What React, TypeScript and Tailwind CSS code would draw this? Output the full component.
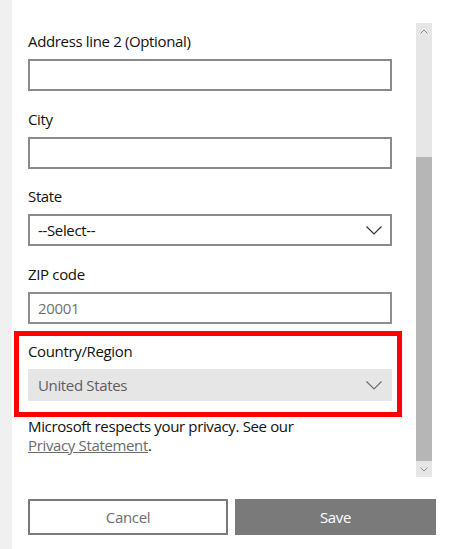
import React from "react";

const font = { fontFamily: '"Open Sans", "Noto Sans", sans-serif' };

function Chevron({ color = "#333333" }: { color?: string }) {
  return (
    <svg width="16" height="9" viewBox="0 0 16 9" fill="none">
      <path d="M0.5 0.5 L8 8 L15.5 0.5" stroke={color} strokeWidth="1.2" />
    </svg>
  );
}

function Label({ children }: { children: React.ReactNode }) {
  return <div className="h-5 text-[15px] leading-5 tracking-[-0.35px] text-[#111111]">{children}</div>;
}

export default function App() {
  return (
    <div className="relative flex h-[549px] w-[458px] overflow-hidden bg-white" style={font}>
      {/* left backdrop strip */}
      <div className="w-[12px] shrink-0 bg-[#f0f0f0]" />

      <div className="flex flex-1 flex-col">
        <div className="flex flex-1">
          {/* form */}
          <div className="flex w-[380px] flex-col pl-[16px] pt-[31px]">
            <div className="flex w-[364px] flex-col">
              <div className="flex flex-col gap-2">
                <Label>Address line 2 (Optional)</Label>
                <div className="h-8 border-2 border-[#8a8a8a]" />
              </div>
              <div className="mt-[18px] flex flex-col gap-2">
                <Label>City</Label>
                <div className="h-8 border-2 border-[#8a8a8a]" />
              </div>
              <div className="mt-[17px] flex flex-col gap-2">
                <Label>State</Label>
                <div className="flex h-8 items-center justify-between border-2 border-[#8a8a8a] pl-[8px] pr-[8px]">
                  <span className="text-[15px] tracking-[-0.35px] text-[#111111]">--Select--</span>
                  <Chevron />
                </div>
              </div>
              <div className="mt-[18px] flex flex-col gap-2">
                <Label>ZIP code</Label>
                <div className="flex h-8 items-center border-2 border-[#8e8e8e] pl-[8px]">
                  <span className="text-[15px] tracking-[-0.35px] text-[#707070]">20001</span>
                </div>
              </div>
              <div className="mt-[17px] flex flex-col gap-2">
                <Label>Country/Region</Label>
                <div className="flex h-8 items-center justify-between bg-[#e6e6e6] pl-[10px] pr-[10px]">
                  <span className="text-[15px] tracking-[-0.35px] text-[#5e5e5e]">United States</span>
                  <Chevron color="#6e6e6e" />
                </div>
              </div>
            </div>
            <div className="mt-[16px] w-[364px] text-[15px] leading-[19px] tracking-[-0.35px] text-[#111111]">
              Microsoft respects your privacy. See our
              <br />
              <span className="text-[#6b6b6b] underline decoration-[#6b6b6b]">Privacy Statement</span>.
            </div>
          </div>

          {/* scrollbar */}
          <div className="ml-[24px] mt-[23px] flex h-[454px] w-[16px] flex-col bg-[#e6e6e6]">
            <div className="flex h-[16px] items-center justify-center">
              <svg width="8" height="5" viewBox="0 0 8 5" fill="none">
                <path d="M0.5 4.5 L4 1 L7.5 4.5" stroke="#8c8c8c" strokeWidth="1" />
              </svg>
            </div>
            <div className="h-[118px]" />
            <div className="h-[304px] bg-[#b6b6b6]" />
            <div className="flex h-[16px] items-center justify-center">
              <svg width="8" height="5" viewBox="0 0 8 5" fill="none">
                <path d="M0.5 0.5 L4 4 L7.5 0.5" stroke="#8c8c8c" strokeWidth="1" />
              </svg>
            </div>
          </div>
        </div>

        {/* buttons */}
        <div className="flex gap-[7px] pb-[14px] pl-[16px]">
          <button className="flex h-[36px] w-[200px] items-center justify-center border-2 border-[#7a7a7a] bg-white text-[15px] tracking-[-0.35px] text-[#6e6e6e]">
            Cancel
          </button>
          <button className="flex h-[36px] w-[201px] items-center justify-center bg-[#7a7a7a] text-[15px] tracking-[-0.35px] text-white">
            Save
          </button>
        </div>
      </div>

      {/* red annotation box */}
      <div className="pointer-events-none absolute left-[14px] top-[331px] h-[86px] w-[388px] border-[5px] border-[#ff0000]" />
    </div>
  );
}
